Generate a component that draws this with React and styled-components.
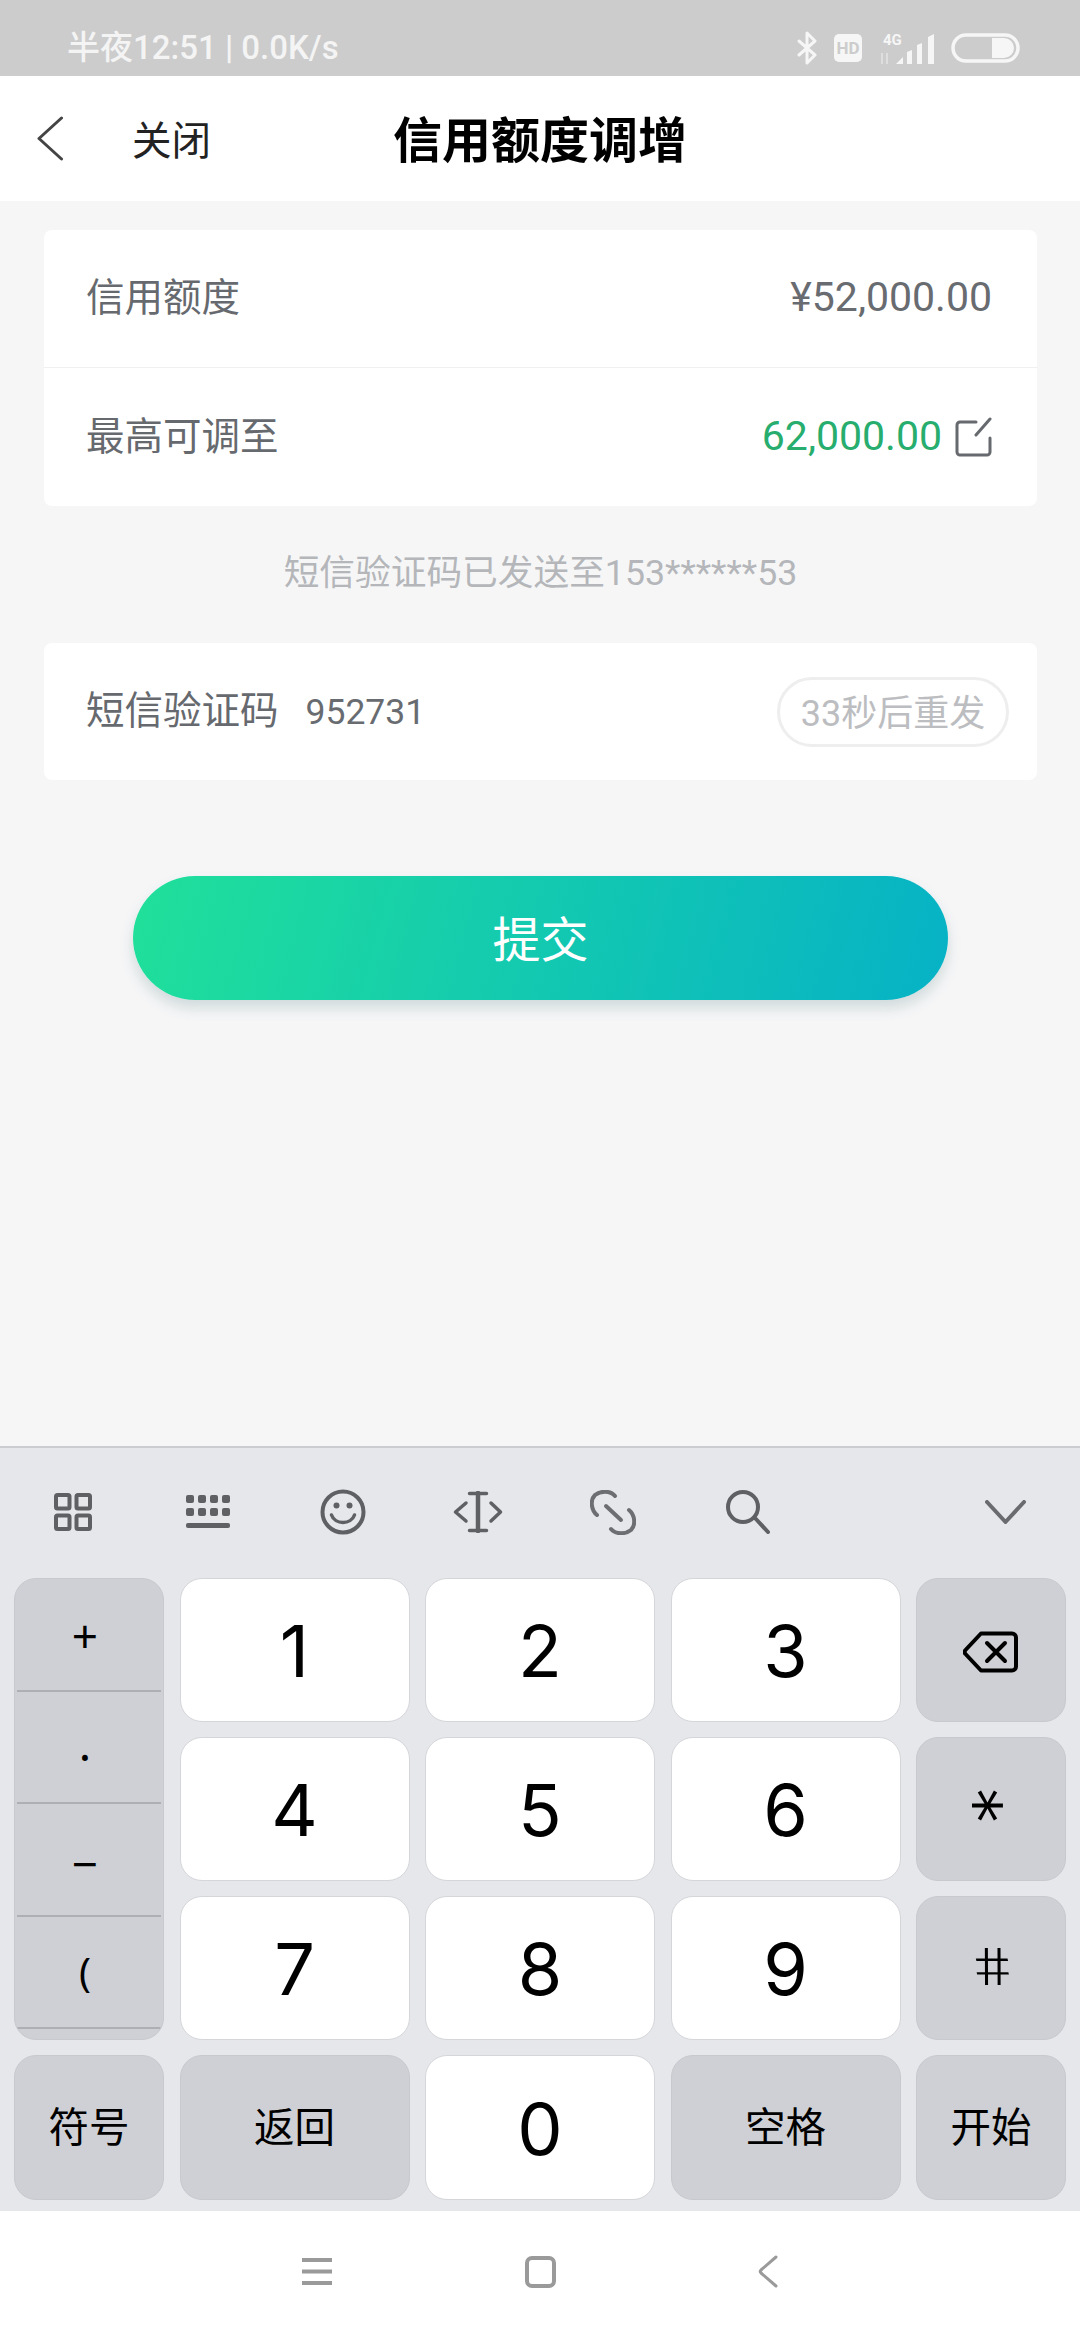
import React from "react";
import styled, { createGlobalStyle } from "styled-components";

const SANS = `Roboto, "Noto Sans CJK SC", sans-serif`;

const Global = createGlobalStyle`
  html, body { margin: 0; padding: 0; background: #f6f6f7; }
  * { box-sizing: border-box; }
`;

const Screen = styled.div`
  width: 1080px;
  height: 2340px;
  display: flex;
  flex-direction: column;
  overflow: hidden;
  font-family: ${SANS};
  background: #f6f6f7;
`;

/* status bar */
const StatusBar = styled.div`
  height: 76px;
  flex: none;
  background: #cccccc;
  display: flex;
  align-items: center;
  justify-content: space-between;
  padding: 20px 60px 0 67px;
`;
const StatusText = styled.span`
  color: #f4f4f4;
  font-size: 33px;
  line-height: 40px;
  font-weight: 500;
  white-space: pre;
`;
const StatusIcons = styled.div`
  display: flex;
  align-items: center;
  gap: 16px;
`;

/* title bar */
const Header = styled.header`
  position: relative;
  height: 125px;
  flex: none;
  background: #ffffff;
  display: flex;
  align-items: center;
  justify-content: center;
`;
const HeaderLeft = styled.div`
  position: absolute;
  left: 37px;
  top: 0;
  bottom: 0;
  display: flex;
  align-items: center;
  gap: 69px;
`;
const CloseLabel = styled.span`
  font-size: 39.5px;
  color: #222222;
  margin-bottom: 2px;
`;
const Title = styled.h1`
  margin: 0 0 5px;
  font-size: 49px;
  font-weight: 700;
  color: #000000;
`;

/* form area */
const Content = styled.main`
  flex: 1;
  padding: 29px 43px 0 44px;
`;
const Card = styled.section`
  background: #ffffff;
  border-radius: 8px;
`;
const Row = styled.div`
  height: ${(p) => p.$h || 137}px;
  padding: 0 45px 0 42px;
  display: flex;
  align-items: center;
  justify-content: space-between;
  border-bottom: ${(p) => (p.$divided ? "1px solid #f0f0f0" : "none")};
`;
const Label = styled.span`
  font-size: 38.5px;
  color: #66696e;
  margin-bottom: 9px;
`;
const Amount = styled.span`
  font-size: 41px;
  margin-bottom: 3px;
  color: ${(p) => (p.$green ? "#27ad6e" : "#686b70")};
`;
const AmountGroup = styled.div`
  display: flex;
  align-items: center;
  gap: 13px;
`;
const Hint = styled.p`
  height: 137px;
  margin: 0;
  padding-bottom: 10px;
  display: flex;
  align-items: center;
  justify-content: center;
  font-size: 35.7px;
  color: #b4b6ba;
`;
const CodeRow = styled(Row)`
  padding-right: 28px;
  justify-content: flex-start;
`;
const CodeValue = styled.span`
  margin-left: 27px;
  font-size: 35.5px;
  color: #686b70;
`;
const ResendPill = styled.div`
  margin-left: auto;
  width: 232px;
  height: 70px;
  border: 3px solid #eeeeee;
  border-radius: 35px;
  display: flex;
  align-items: center;
  justify-content: center;
  padding-bottom: 3px;
  font-size: 36px;
  color: #bcbdc0;
`;
const Submit = styled.button`
  display: flex;
  align-items: center;
  justify-content: center;
  width: 815px;
  height: 124px;
  margin: 96px 0 0 89px;
  padding: 0 0 4px;
  border: none;
  border-radius: 62px;
  background: linear-gradient(105deg, #20e09a 0%, #06b2c6 100%);
  box-shadow: 0 8px 14px rgba(60, 110, 110, 0.2);
  color: #ffffff;
  font-family: inherit;
  font-size: 48px;
`;

/* soft keyboard */
const Keyboard = styled.div`
  height: 765px;
  flex: none;
  background: #e6e7eb;
  border-top: 2px solid #cbccd0;
  padding: 0 14px;
`;
const Toolbar = styled.div`
  height: 130px;
  display: flex;
  align-items: center;
  margin-left: -8.5px;
  padding-bottom: 2px;
`;
const ToolSlot = styled.div`
  width: 135px;
  flex: none;
  display: flex;
  justify-content: center;
`;
const ToolEnd = styled.div`
  margin-left: auto;
  margin-right: 40px;
  display: flex;
`;
const KeyGrid = styled.div`
  display: grid;
  grid-template-columns: 150px repeat(3, 230px) 150px;
  grid-template-rows: 143.5px 143.5px 143.5px 145px;
  column-gap: 15.5px;
  row-gap: 15.5px;
`;
const Key = styled.div`
  display: flex;
  align-items: center;
  justify-content: center;
  border-radius: 22px;
  color: #000000;
  background: ${(p) => (p.$light ? "#ffffff" : "#cfd0d5")};
  border: 1px solid ${(p) => (p.$light ? "#d5d6da" : "#c8c9ce")};
  padding-top: ${(p) => (p.$digit ? 2 : 1)}px;
  font-size: ${(p) => (p.$digit ? 72 : 40.5)}px;
  font-family: ${(p) => (p.$digit ? `Inter, sans-serif` : SANS)};
  line-height: 1;
`;
const SymbolColumn = styled.div`
  grid-row: 1 / span 3;
  display: flex;
  flex-direction: column;
  border-radius: 22px;
  background: #cfd0d5;
  border: 1px solid #c8c9ce;
  overflow: hidden;
`;
const SymbolCell = styled.div`
  height: 112.5px;
  flex: none;
  margin: 0 2px;
  border-bottom: 2px solid #aeafb4;
  display: flex;
  align-items: center;
  justify-content: center;
  padding-top: ${(p) => p.$nudge || 0}px;
  padding-right: 8px;
  font-size: ${(p) => p.$size || 46}px;
  font-family: "Noto Sans", sans-serif;
  color: #000000;
`;
const StarGlyph = styled.span`
  font-family: "DejaVu Sans", sans-serif;
  font-size: 68px;
  display: inline-block;
  transform: translate(-1px, 10px) rotate(90deg);
  transform-origin: 50% 30%;
`;
const HashGlyph = styled.span`
  font-family: Roboto, sans-serif;
  font-weight: 300;
  font-size: 52px;
  display: inline-block;
  transform: skewX(13deg) scaleX(1.2);
`;

/* system navigation */
const NavBar = styled.nav`
  height: 129px;
  flex: none;
  background: #ffffff;
  display: flex;
  align-items: center;
  padding: 0 0 8px 302px;
`;
const NavSlot = styled.div`
  display: flex;
  margin-left: ${(p) => p.$offset || 0}px;
`;

const Stroke = styled.svg`
  display: block;
  fill: none;
  stroke: ${(p) => p.$color || "#5f6063"};
  stroke-width: ${(p) => p.$weight || 4};
  stroke-linecap: round;
  stroke-linejoin: round;
`;
const BackspaceStroke = styled(Stroke)`
  margin-top: 3px;
`;

const Bluetooth = () => (
  <Stroke width="21" height="34" viewBox="0 0 21 34" $color="#f6f6f6" $weight="3">
    <path d="M2 10 L18 24 L10 32 V2 L18 10 L2 24" />
  </Stroke>
);

const HdBadge = () => (
  <svg width="28" height="28" viewBox="0 0 28 28" style={{ display: "block" }}>
    <rect width="28" height="28" rx="5" fill="#f6f6f6" />
    <text x="14" y="20" textAnchor="middle" fontFamily="Roboto" fontWeight="700" fontSize="17" fill="#cccccc">HD</text>
  </svg>
);

const Signal = () => (
  <svg width="57" height="40" viewBox="0 -6 57 40" style={{ display: "block" }}>
    <text x="5" y="11" fontFamily="Roboto" fontWeight="700" fontSize="15" fill="#f6f6f6">4G</text>
    <path d="M4 30 V19 M9 19 V30" stroke="#dedede" strokeWidth="2" />
    <path d="M18 30 L25 23 V30 Z" fill="#f6f6f6" />
    <path d="M29 30 V18 L34 16 V30 Z M39 30 V11 L44 9 V30 Z M50 30 V3 L56 0 V30 Z" fill="#f6f6f6" />
  </svg>
);

const Battery = () => (
  <svg width="69" height="30" viewBox="0 0 69 30" style={{ display: "block" }}>
    <rect x="2" y="2" width="65" height="26" rx="13" fill="none" stroke="#f6f6f6" strokeWidth="3.5" />
    <path d="M41 5 H53 A10 10 0 0 1 63 15 A10 10 0 0 1 53 25 H41 Z" fill="#f6f6f6" />
  </svg>
);

const BackArrow = () => (
  <Stroke width="26" height="45" viewBox="0 0 26 45" $color="#444444" $weight="3">
    <path d="M24.500 2 L2 22.5 L24.500 43" />
  </Stroke>
);

const EditIcon = () => (
  <Stroke width="37" height="40" viewBox="0 0 37 40" $color="#66696e" $weight="3">
    <path d="M21 5 H5 A3 3 0 0 0 2 8 V35 A3 3 0 0 0 5 38 H32 A3 3 0 0 0 35 35 V21" />
    <path d="M35 2 L21 18" />
  </Stroke>
);

const GridIcon = () => (
  <Stroke width="38" height="38" viewBox="0 0 38 38" $weight="4" style={{ strokeLinecap: "butt" }}>
    <rect x="2" y="2" width="13.5" height="13.5" rx="1.5" />
    <rect x="22.5" y="2" width="13.5" height="13.5" rx="1.5" />
    <rect x="2" y="22.5" width="13.5" height="13.5" rx="1.5" />
    <rect x="22.5" y="22.5" width="13.5" height="13.5" rx="1.5" />
  </Stroke>
);

const KeypadIcon = () => (
  <svg width="46" height="34" viewBox="0 0 46 34" fill="#5f6063" style={{ display: "block" }}>
    {[1, 13, 25, 37].flatMap((x) =>
      [0, 13].map((y) => <rect key={`${x}-${y}`} x={x} y={y} width="8" height="8" rx="2" />)
    )}
    <rect x="1" y="28" width="44" height="5" rx="2" />
  </svg>
);

const SmileIcon = () => (
  <svg width="46" height="46" viewBox="0 0 46 46" style={{ display: "block" }}>
    <circle cx="23" cy="23" r="20.5" fill="none" stroke="#5f6063" strokeWidth="4" />
    <circle cx="16.5" cy="16.5" r="3" fill="#5f6063" />
    <circle cx="29.5" cy="16.5" r="3" fill="#5f6063" />
    <path d="M11.5 26 C15 36 31 36 34.5 26" fill="none" stroke="#5f6063" strokeWidth="3.5" strokeLinecap="round" />
  </svg>
);

const CursorIcon = () => (
  <Stroke width="50" height="42" viewBox="0 0 50 42" $weight="3.5" $color="#5f6063">
    <path d="M25 2 V40" strokeWidth="4.5" />
    <path d="M16.5 2.5 H33.5 M16.5 39.5 H33.5" />
    <path d="M13 12 L2.5 21 L13 30 M38 12 L47.5 21 L38 30" />
  </Stroke>
);

const LinkIcon = () => (
  <Stroke width="46" height="45" viewBox="0 0 46 45" $color="#6d6e71">
    <path d="M25 6 C20 0 10 1 5 5 C0 10 1 20 7 25" />
    <path d="M21 39 C26 45 36 44 41 40 C46 35 45 25 39 20" />
    <path d="M16 16 L31 30" />
  </Stroke>
);

const SearchIcon = () => (
  <Stroke width="44" height="44" viewBox="0 0 44 44" $color="#5f6063">
    <circle cx="17" cy="17" r="15" />
    <path d="M29 28 L42 42" />
  </Stroke>
);

const ChevronDown = () => (
  <Stroke width="41" height="24" viewBox="0 0 41 24" $color="#6a6b6e">
    <path d="M2 2 L20.5 22 L39 2" />
  </Stroke>
);

const BackspaceIcon = () => (
  <BackspaceStroke width="56" height="42" viewBox="0 0 56 42" $color="#000000">
    <path d="M18 2.5 H49 A4 4 0 0 1 53 6.5 V35.5 A4 4 0 0 1 49 39.5 H18 L2.5 23 A3 3 0 0 1 2.5 19 Z" />
    <path d="M24 12 L42 30 M42 12 L24 30" />
  </BackspaceStroke>
);

const MenuIcon = () => (
  <Stroke width="30" height="27" viewBox="0 0 30 27" $color="#9a9a9a" style={{ strokeLinecap: "butt" }}>
    <path d="M0 2 H30 M0 13.5 H30 M0 25 H30" />
  </Stroke>
);

const HomeIcon = () => (
  <Stroke width="31" height="32" viewBox="0 0 31 32" $color="#9a9a9a">
    <rect x="2" y="2" width="27" height="28" rx="5" />
  </Stroke>
);

const NavBack = () => (
  <Stroke width="20" height="33" viewBox="0 0 20 33" $color="#9a9a9a" $weight="3">
    <path d="M18 2 L3 15 Q1.500 16.500 3 18 L18 31" />
  </Stroke>
);

const TOOLS = [GridIcon, KeypadIcon, SmileIcon, CursorIcon, LinkIcon, SearchIcon];
const SYMBOLS = [
  { glyph: "+", nudge: 2 },
  { glyph: "·", nudge: 18 },
  { glyph: "−", nudge: 8 },
  { glyph: "(", nudge: 0, size: 40 },
];
const DIGIT_ROWS = [
  { digits: ["1", "2", "3"], side: <BackspaceIcon /> },
  { digits: ["4", "5", "6"], side: <StarGlyph>*</StarGlyph> },
  { digits: ["7", "8", "9"], side: <HashGlyph>#</HashGlyph> },
];

export default function App() {
  return (
    <Screen>
      <Global />
      <StatusBar>
        <StatusText>半夜12:51 | 0.0K/s</StatusText>
        <StatusIcons>
          <Bluetooth />
          <HdBadge />
          <Signal />
          <Battery />
        </StatusIcons>
      </StatusBar>

      <Header>
        <HeaderLeft>
          <BackArrow />
          <CloseLabel>关闭</CloseLabel>
        </HeaderLeft>
        <Title>信用额度调增</Title>
      </Header>

      <Content>
        <Card>
          <Row $divided $h={138}>
            <Label>信用额度</Label>
            <Amount>¥52,000.00</Amount>
          </Row>
          <Row $h={138}>
            <Label>最高可调至</Label>
            <AmountGroup>
              <Amount $green>62,000.00</Amount>
              <EditIcon />
            </AmountGroup>
          </Row>
        </Card>
        <Hint>短信验证码已发送至153******53</Hint>
        <Card>
          <CodeRow>
            <Label>短信验证码</Label>
            <CodeValue>952731</CodeValue>
            <ResendPill>33秒后重发</ResendPill>
          </CodeRow>
        </Card>
        <Submit>提交</Submit>
      </Content>

      <Keyboard>
        <Toolbar>
          {TOOLS.map((Icon, i) => (
            <ToolSlot key={i}>
              <Icon />
            </ToolSlot>
          ))}
          <ToolEnd>
            <ChevronDown />
          </ToolEnd>
        </Toolbar>
        <KeyGrid>
          <SymbolColumn>
            {SYMBOLS.map((s) => (
              <SymbolCell key={s.glyph} $nudge={s.nudge} $size={s.size}>
                {s.glyph}
              </SymbolCell>
            ))}
          </SymbolColumn>
          {DIGIT_ROWS.map((row) => (
            <React.Fragment key={row.digits[0]}>
              {row.digits.map((d) => (
                <Key key={d} $light $digit>
                  {d}
                </Key>
              ))}
              <Key>{row.side}</Key>
            </React.Fragment>
          ))}
          <Key>符号</Key>
          <Key>返回</Key>
          <Key $light $digit>
            0
          </Key>
          <Key>空格</Key>
          <Key>开始</Key>
        </KeyGrid>
      </Keyboard>

      <NavBar>
        <NavSlot>
          <MenuIcon />
        </NavSlot>
        <NavSlot $offset={193}>
          <HomeIcon />
        </NavSlot>
        <NavSlot $offset={202}>
          <NavBack />
        </NavSlot>
      </NavBar>
    </Screen>
  );
}
